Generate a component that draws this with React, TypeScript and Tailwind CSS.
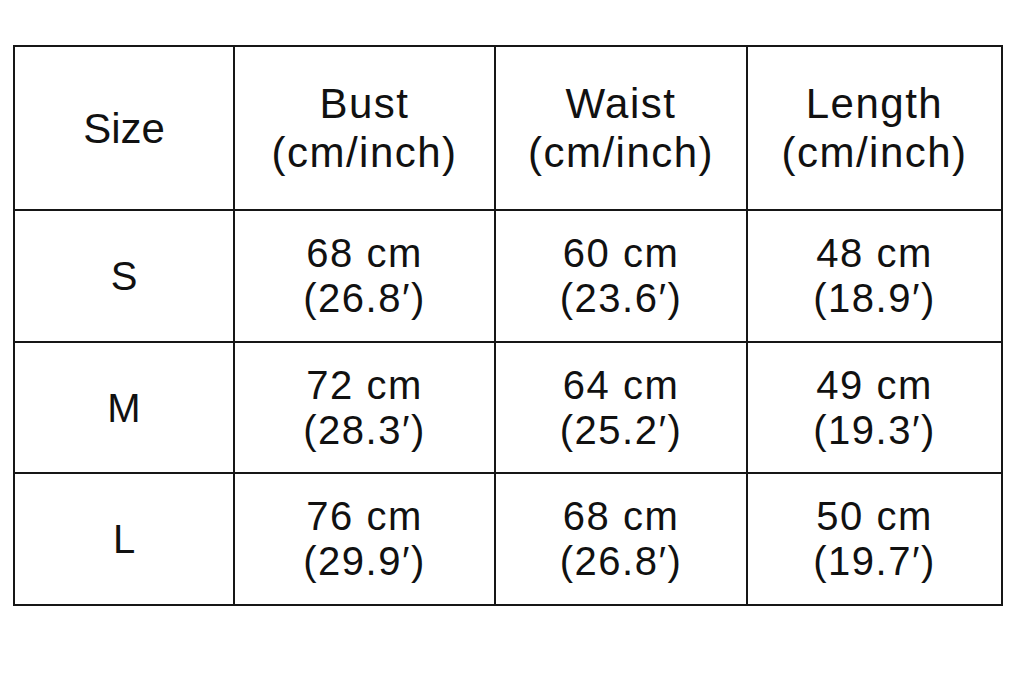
const ROWS = [
  { size: 'S', bust: ['68 cm', '(26.8′)'], waist: ['60 cm', '(23.6′)'], length: ['48 cm', '(18.9′)'], h: 'h-[132px]' },
  { size: 'M', bust: ['72 cm', '(28.3′)'], waist: ['64 cm', '(25.2′)'], length: ['49 cm', '(19.3′)'], h: 'h-[131px]' },
  { size: 'L', bust: ['76 cm', '(29.9′)'], waist: ['68 cm', '(26.8′)'], length: ['50 cm', '(19.7′)'], h: 'h-[132px]' },
]

const cell = 'border-2 border-[#161616] text-center align-middle'

function Pair({ lines }: { lines: string[] }) {
  return (
    <div className="leading-[45px] tracking-[1.5px]">
      <div>{lines[0]}</div>
      <div>{lines[1]}</div>
    </div>
  )
}

export default function App() {
  return (
    <div
      className="w-[1024px] h-[683px] bg-white text-[#111] pt-[45px] pl-[13px]"
      style={{ fontFamily: '"Liberation Sans", Arial, "DejaVu Sans", sans-serif' }}
    >
      <table className="table-fixed border-collapse w-[988px] text-[40px]">
        <colgroup>
          <col className="w-[220px]" />
          <col className="w-[261px]" />
          <col className="w-[252px]" />
          <col className="w-[255px]" />
        </colgroup>
        <thead>
          <tr className="h-[164px]">
            <th className={`${cell} font-normal text-[42px]`}>Size</th>
            {['Bust', 'Waist', 'Length'].map((t) => (
              <th key={t} className={`${cell} font-normal`}>
                <div className="leading-[49px] text-[42px] tracking-[1.5px]">
                  <div>{t}</div>
                  <div>(cm/inch)</div>
                </div>
              </th>
            ))}
          </tr>
        </thead>
        <tbody>
          {ROWS.map((r) => (
            <tr key={r.size} className={r.h}>
              <td className={cell}>{r.size}</td>
              <td className={cell}><Pair lines={r.bust} /></td>
              <td className={cell}><Pair lines={r.waist} /></td>
              <td className={cell}><Pair lines={r.length} /></td>
            </tr>
          ))}
        </tbody>
      </table>
    </div>
  )
}
